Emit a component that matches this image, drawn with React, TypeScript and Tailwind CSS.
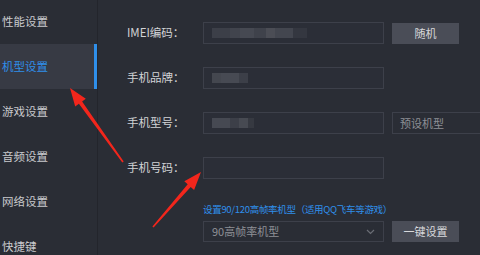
const menu = ["性能设置", "机型设置", "游戏设置", "音频设置", "网络设置", "快捷键"];

const font = { fontFamily: '"Noto Sans CJK SC", "Noto Sans", sans-serif' };

// pixelated "blurred" content inside an input
const Mosaic = ({ cells }: { cells: { w: number; c: string }[] }) => (
    <div className="flex h-[10px] items-stretch">
        {cells.map((cell, i) => (
            <div key={i} className={cell.c} style={{ width: cell.w }} />
        ))}
    </div>
);

const Field = ({ children }: { children?: React.ReactNode }) => (
    <div className="h-[22px] w-[181px] border border-[#3d404a] bg-[#2b2e37] flex items-center px-[8px]">
        {children}
    </div>
);

const Row = ({ label, children }: { label: string; children?: React.ReactNode }) => (
    <div className="flex items-center h-[22px]">
        <div className="w-[76px] text-[11.5px] text-[#d2d3d6]">{label}</div>
        {children}
    </div>
);

const App = () => {
    return (
        <div className="relative w-[480px] h-[255px] overflow-hidden bg-[#2a2d35] flex" style={font}>
            {/* Sidebar */}
            <div className="w-[98px] shrink-0 border-r border-[#23252c] flex flex-col">
                {menu.map((item, idx) =>
                    idx === 1 ? (
                        <div
                            key={item}
                            className="h-[45px] shrink-0 flex items-center pl-[2px] bg-[#373a44] text-[#2f8fea] text-[11.5px] border-r-[3px] border-[#2f8fea]"
                        >
                            {item}
                        </div>
                    ) : (
                        <div
                            key={item}
                            className={`${idx === 0 ? "h-[44px]" : "h-[45px]"} shrink-0 flex items-center pl-[2px] text-[#c9cacd] text-[11.5px]`}
                        >
                            {item}
                        </div>
                    )
                )}
            </div>

            {/* Settings form */}
            <div className="flex-1 pl-[29px] pt-[22px] flex flex-col gap-[23px]">
                <Row label="IMEI编码：">
                    <Field>
                        <Mosaic
                            cells={[
                                { w: 18, c: "bg-[#3c3f48]" },
                                { w: 10, c: "bg-[#41444d]" },
                                { w: 14, c: "bg-[#464952]" },
                                { w: 12, c: "bg-[#3f424b]" },
                                { w: 9, c: "bg-[#4b4d55]" },
                                { w: 18, c: "bg-[#43464f]" },
                                { w: 14, c: "bg-[#343740]" },
                            ]}
                        />
                    </Field>
                    <button className="ml-[8px] w-[67px] h-[21px] bg-[#4a4d57] text-[#d8d9dc] text-[11px]">随机</button>
                </Row>
                <Row label="手机品牌：">
                    <Field>
                        <Mosaic
                            cells={[
                                { w: 9, c: "bg-[#44474f]" },
                                { w: 18, c: "bg-[#474a53]" },
                                { w: 9, c: "bg-[#3c3f48]" },
                            ]}
                        />
                    </Field>
                </Row>
                <Row label="手机型号：">
                    <Field>
                        <Mosaic
                            cells={[
                                { w: 18, c: "bg-[#464952]" },
                                { w: 9, c: "bg-[#3c3f48]" },
                                { w: 9, c: "bg-[#474a52]" },
                                { w: 6, c: "bg-[#363941]" },
                            ]}
                        />
                    </Field>
                    <div className="ml-[8px] w-[100px] h-[22px] border border-[#3d404a] flex items-center pl-[7px] text-[#8e9096] text-[11px]">
                        预设机型
                    </div>
                </Row>
                <Row label="手机号码：">
                    <Field />
                </Row>

                <div className="pl-[76px] flex flex-col gap-[5px]">
                    <div className="text-[9.5px] tracking-[-0.3px] leading-[14px] text-[#2f8fea] whitespace-nowrap">
                        设置90/120高帧率机型（适用QQ飞车等游戏）
                    </div>
                    <div className="flex items-center">
                        <div className="w-[181px] h-[21px] border border-[#3d404a] flex items-center justify-between pl-[8px] pr-[8px] text-[#8e9096] text-[11px]">
                            <span>90高帧率机型</span>
                            <svg width="9" height="6" viewBox="0 0 9 6" fill="none">
                                <path d="M1 1l3.5 3.5L8 1" stroke="#6a6d75" strokeWidth="1.2" />
                            </svg>
                        </div>
                        <button className="ml-[8px] w-[67px] h-[21px] bg-[#4a4d57] text-[#d8d9dc] text-[11px]">一键设置</button>
                    </div>
                </div>
            </div>

            {/* Red annotation arrows */}
            <svg className="absolute inset-0 pointer-events-none" width="480" height="255">
                <polygon
                    fill="#f2261c"
                    points="70,88 85.8,98.8 82.1,101.4 123.7,161.5 122.3,162.5 78.9,103.8 75.2,106.4"
                />
                <polygon
                    fill="#f2261c"
                    points="201,172 194.1,189.9 190.7,186.9 153.6,227.5 152.4,226.5 187.7,184.3 184.3,181.3"
                />
            </svg>
        </div>
    );
};

export default App;
